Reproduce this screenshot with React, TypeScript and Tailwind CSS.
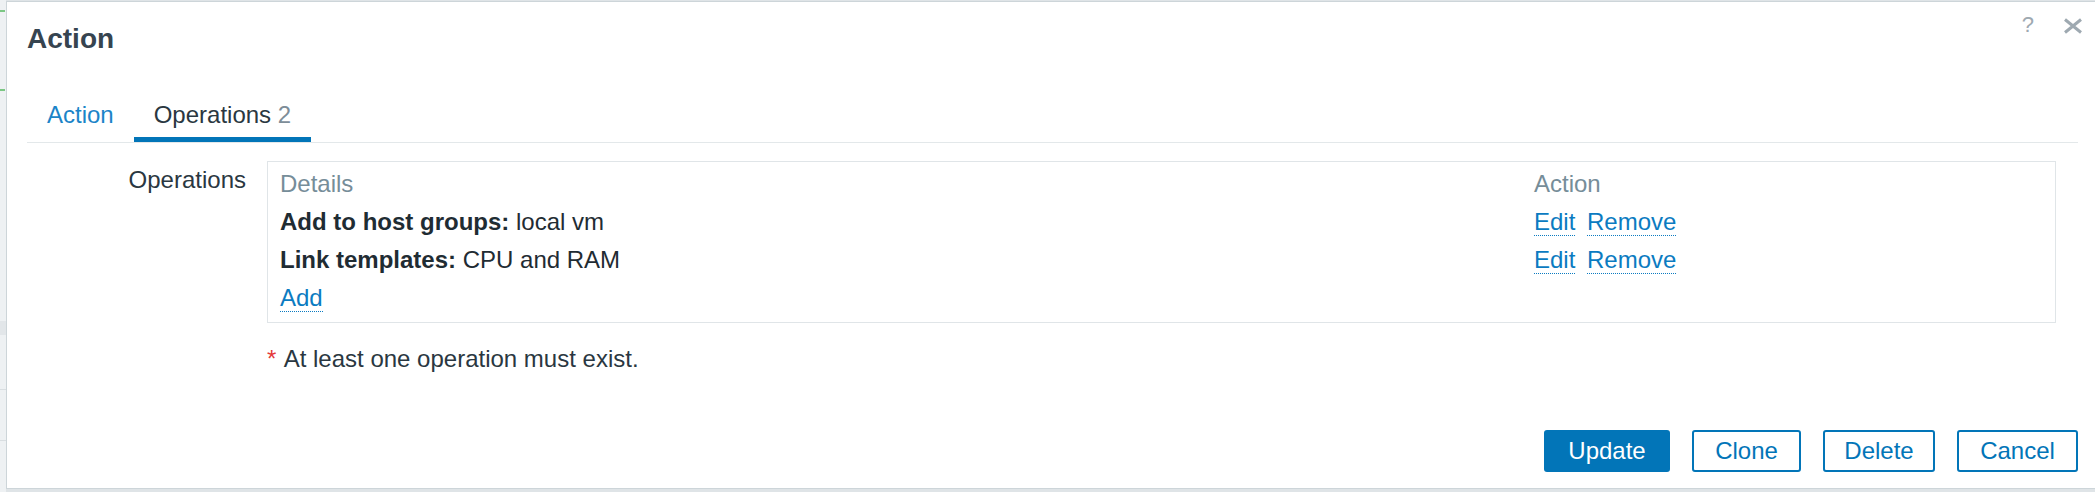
import React from 'react'

const LINK = 'text-[#0b7bc1]'

function DottedLink({ children, className = '' }: { children: React.ReactNode; className?: string }) {
  return (
    <a
      href="#"
      className={`${LINK} border-b border-dotted border-[#0b7bc1] no-underline ${className}`}
    >
      {children}
    </a>
  )
}

function Backdrop() {
  // slice of the page that sits behind the modal
  return (
    <div className="flex w-[6px] shrink-0 flex-col bg-[#eef1f3]">
      <div className="mt-[10px] h-[2px] w-[5px] bg-[#7cc784]" />
      <div className="mt-[77px] h-[2px] w-[5px] bg-[#7cc784]" />
      <div className="mt-[230px] h-[14px] w-[6px] bg-[#e2e6e9]" />
      <div className="mt-[54px] h-px w-[6px] bg-[#d9dee1]" />
      <div className="mt-[50px] h-px w-[6px] bg-[#d9dee1]" />
    </div>
  )
}

function Button({ label, primary, width }: { label: string; primary?: boolean; width: string }) {
  return (
    <button
      className={
        primary
          ? `h-[42px] ${width} rounded-[3px] bg-[#0275b8] text-[24px] leading-none text-white`
          : `h-[42px] ${width} rounded-[3px] border-2 border-[#0275b8] bg-white text-[24px] leading-none text-[#0275b8]`
      }
    >
      {label}
    </button>
  )
}

function OperationRow({ label, value }: { label: string; value: string }) {
  return (
    <>
      <div>
        <b>{label}</b> {value}
      </div>
      <div>
        <DottedLink>Edit</DottedLink> <DottedLink className="ml-[5px]">Remove</DottedLink>
      </div>
    </>
  )
}

export default function App() {
  return (
    <div className="flex h-[492px] w-[2095px] overflow-hidden bg-[#dfe4e7] font-['Liberation_Sans',Arial,sans-serif] text-[#1f2c33]">
      <Backdrop />
      <div className="relative mt-[1px] flex h-[488px] flex-1 flex-col border-l border-t border-b border-[#cdd5d9] bg-white">
        {/* header buttons */}
        <div className="absolute right-[12px] top-[14px] flex items-center gap-[29px] text-[#9ea9b1]">
          <span className="text-[22px] leading-[18px]">?</span>
          <svg width="20" height="16" viewBox="0 0 20 16" className="mt-[1px]">
            <path d="M2 1.5 L18 14.5 M18 1.5 L2 14.5" stroke="#9ea9b1" strokeWidth="3" />
          </svg>
        </div>

        <div className="pl-[20px] pt-[21px]">
          <h4 className="text-[28px] font-bold leading-[32px] text-[#364450]">Action</h4>
        </div>

        {/* tabs */}
        <div className="ml-[20px] mr-[17px] mt-[46px] flex border-b border-[#e3e8ea]">
          <div className="border-b-[5px] border-transparent px-[20px] pb-[8px] text-[24px] leading-[28px] text-[#1b84c8]">
            Action
          </div>
          <div className="border-b-[5px] border-[#0275b8] px-[20px] pb-[8px] text-[24px] leading-[28px] text-[#2a3741]">
            Operations <span className="text-[#7d8d98]">2</span>
          </div>
        </div>

        {/* form */}
        <div className="mt-[18px] flex text-[24px]">
          <div className="ml-[20px] w-[240px] shrink-0 pr-[21px] text-right leading-[38px] text-[#2a3741]">
            Operations
          </div>
          <div className="flex flex-col">
            <div className="w-[1789px] border border-[#e0e5e8] px-[12px] pb-[5px] pt-[3px]">
              <div className="grid grid-cols-[1fr_509px] leading-[38px]">
                <div className="text-[#768d99]">Details</div>
                <div className="text-[#768d99]">Action</div>

                <OperationRow label="Add to host groups:" value="local vm" />
                <OperationRow label="Link templates:" value="CPU and RAM" />

                <div>
                  <DottedLink>Add</DottedLink>
                </div>
                <div />
              </div>
            </div>
            <div className="mt-[17px] leading-[38px] text-[#2a3741]">
              <span className="text-[#e4393a]">*</span>
              <span className="ml-[2px]"> At least one operation must exist.</span>
            </div>
          </div>
        </div>

        {/* footer */}
        <div className="mt-auto flex justify-end gap-[22px] pb-[16px] pr-[17px]">
          <Button label="Update" primary width="w-[126px]" />
          <Button label="Clone" width="w-[109px]" />
          <Button label="Delete" width="w-[112px]" />
          <Button label="Cancel" width="w-[121px]" />
        </div>
      </div>
    </div>
  )
}
